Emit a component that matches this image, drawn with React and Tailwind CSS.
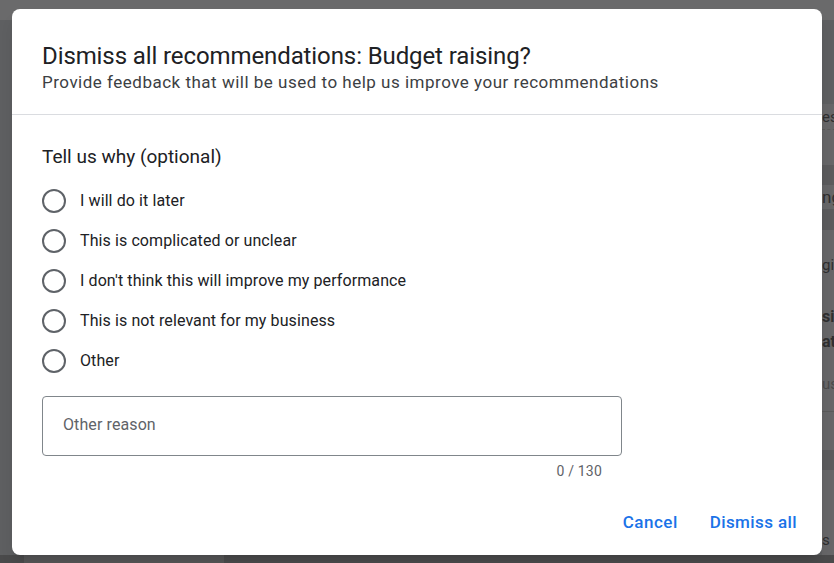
import React, { useState } from 'react';

const REASONS = [
  'I will do it later',
  'This is complicated or unclear',
  "I don't think this will improve my performance",
  'This is not relevant for my business',
  'Other',
];

function Backdrop() {
  // the page behind the dialog, already dimmed by the scrim
  return (
    <div className="absolute inset-0 bg-[#5e5f61] overflow-hidden">
      <div className="h-[20px] bg-[#6a6a6b]" />
      <div className="absolute left-[822px] top-[104px] w-[30px] bg-[#666668] text-[#2f2f30] text-[15px] leading-[24px]">
        <div className="h-[26px] flex items-center border-b border-dashed border-[#5a5a5a]">es</div>
        <div className="h-[35px]" />
        <div className="h-[20px] bg-[#5b5b5d]" />
        <div className="h-[24px] text-[17px]">ng</div>
        <div className="h-[21px] bg-[#5b5b5d]" />
        <div className="h-[23px]" />
        <div className="h-[24px]">gil</div>
        <div className="h-[27px]" />
        <div className="h-[50px] font-bold text-[16px] leading-[25px]">sic<br />at</div>
        <div className="h-[18px]" />
        <div className="h-[24px] text-[#4a4a4b]">us</div>
        <div className="h-[16px] border-b border-[#5a5a5a]" />
        <div className="h-[38px]" />
        <div className="h-[20px] bg-[#5b5b5d]" />
        <div className="h-[58px]" />
        <div className="h-[24px]">s</div>
        <div className="h-[8px]" />
      </div>
      <div className="absolute left-0 top-[555px] w-full h-[8px] bg-[#4a4a4b]">
        <div className="ml-[24px] w-[200px] h-full bg-[#555556]" />
      </div>
    </div>
  );
}

function Radio({ checked, label, onSelect }) {
  return (
    <label className="flex items-center h-[40px] cursor-pointer" onClick={onSelect}>
      <span className="w-[24px] h-[24px] rounded-full border-2 border-[#5f6368] flex items-center justify-center">
        {checked && <span className="w-[12px] h-[12px] rounded-full bg-[#1a73e8]" />}
      </span>
      <span className="ml-[14px] text-[16px] tracking-[0.1px] text-[#202124]">{label}</span>
    </label>
  );
}

export default function App() {
  const [reason, setReason] = useState(null);
  const [other, setOther] = useState('');

  return (
    <div className="relative w-[834px] h-[563px] overflow-hidden font-['Roboto','Liberation_Sans',sans-serif]">
      <Backdrop />

      <div className="absolute left-[12px] top-[9px] w-[810px] h-[546px] bg-white rounded-[8px] shadow-lg flex flex-col">
        <header className="px-[30px] pt-[32px] pb-[21px] border-b border-[#dadce0]">
          <h1 className="text-[24px] leading-[30px] tracking-[-0.1px] text-[#202124]">Dismiss all recommendations: Budget raising?</h1>
          <p className="text-[17px] leading-[22px] text-[#3c4043] tracking-[0.5px]">Provide feedback that will be used to help us improve your recommendations</p>
        </header>

        <div className="px-[30px] pt-[30px] flex-1">
          <h2 className="text-[19px] leading-[24px] text-[#202124]">Tell us why (optional)</h2>
          <div className="mt-[12px] flex flex-col">
            {REASONS.map((r) => (
              <Radio key={r} label={r} checked={reason === r} onSelect={() => setReason(r)} />
            ))}
          </div>

          <div className="mt-[15px] w-[580px]">
            <input
              value={other}
              maxLength={130}
              onChange={(e) => setOther(e.target.value)}
              placeholder="Other reason"
              className="w-full h-[60px] border border-[#80868b] rounded-[4px] px-[20px] pb-[4px] text-[16px] tracking-[0.1px] text-[#202124] placeholder:text-[#5f6368] outline-none"
            />
            <div className="text-right pr-[20px] pt-[5px] text-[14px] tracking-[0.2px] leading-[20px] text-[#5f6368]">{other.length} / 130</div>
          </div>
        </div>

        <footer className="flex justify-end items-center gap-[16px] px-[17px] pb-[14px]">
          <button className="px-[8px] h-[36px] text-[17px] tracking-[0.5px] font-medium text-[#1a73e8]">Cancel</button>
          <button className="px-[8px] h-[36px] text-[17px] tracking-[0.4px] font-medium text-[#1a73e8]">Dismiss all</button>
        </footer>
      </div>
    </div>
  );
}
